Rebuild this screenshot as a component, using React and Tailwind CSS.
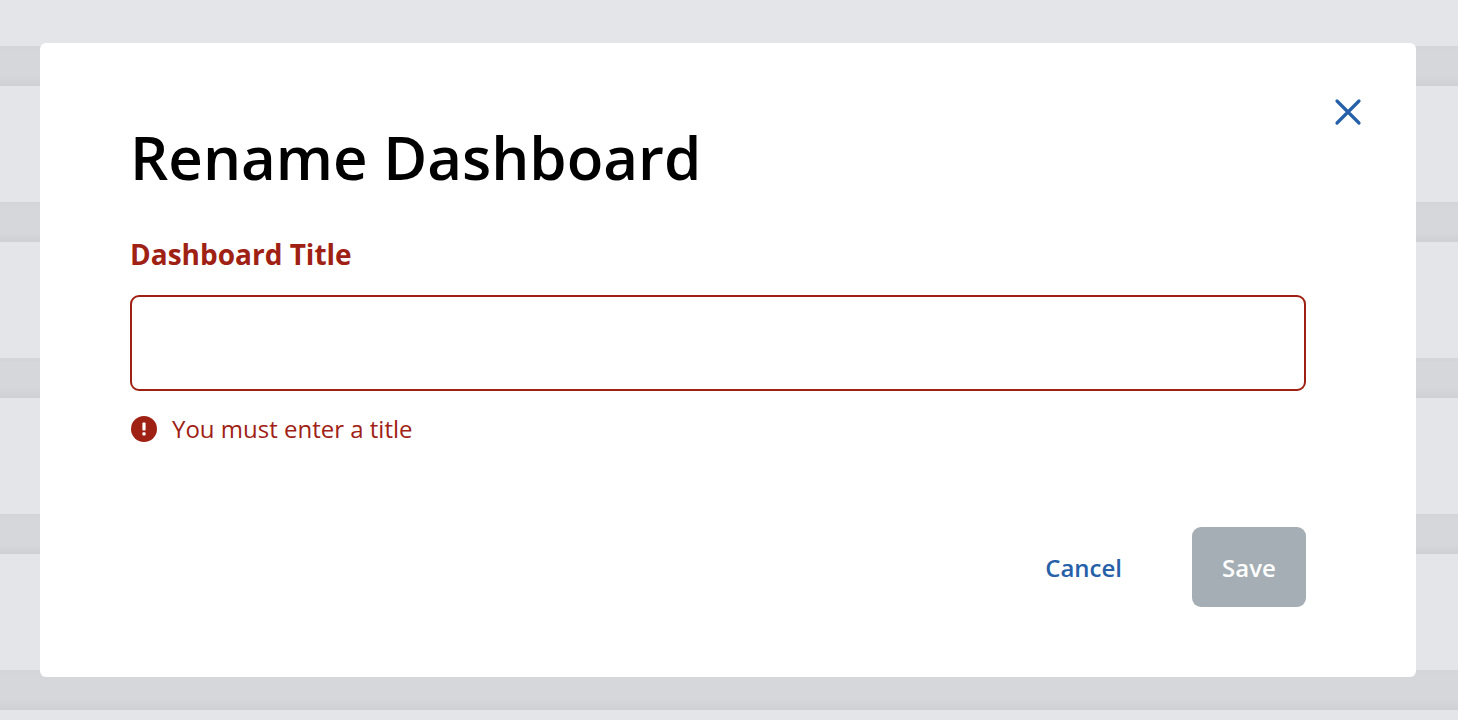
import React from "react";

function Band({ first }) {
  return (
    <>
      <div className={first ? "h-[46px] bg-[#e4e5e9]" : "h-[116px] bg-[#e4e5e9]"} />
      <div className="h-[40px] bg-[linear-gradient(to_bottom,#d3d4d8,#d6d7db_12%,#d6d7db_75%,#cfd0d4)]" />
    </>
  );
}

export default function App() {
  return (
    <div className="relative h-[720px] w-full overflow-hidden bg-[#e4e5e9] font-['Open_Sans','Noto_Sans',sans-serif]">
      <div className="flex flex-col">
        <Band first />
        <Band />
        <Band />
        <Band />
        <Band />
      </div>
      <div className="absolute left-[40px] top-[43px] flex h-[634px] w-[1376px] flex-col rounded-[6px] bg-white pl-[90px] pr-[110px] pt-[76px]">
        <button className="absolute right-[53px] top-[54px] text-[#2560a8]" aria-label="Close">
          <svg width="30" height="30" viewBox="0 0 30 30" fill="none" stroke="currentColor" strokeWidth="3.2" strokeLinecap="round">
            <path d="M4 4 L26 26 M26 4 L4 26" />
          </svg>
        </button>
        <h1 className="text-[60px] font-semibold leading-[76px] text-black">Rename Dashboard</h1>
        <label className="mt-[41px] text-[28px] font-bold leading-[36px] text-[#9f2114]">Dashboard Title</label>
        <div className="mt-[23px] h-[96px] w-full rounded-[9px] border-2 border-[#9f2114]" />
        <div className="mt-[21px] flex items-center gap-[15px] pl-px text-[#9f2114]">
          <svg width="26" height="26" viewBox="0 0 26 26">
            <circle cx="13" cy="13" r="13" fill="#9f2114" />
            <rect x="11.4" y="6.5" width="3.2" height="8" rx="1" fill="#fff" />
            <rect x="11.4" y="16.3" width="3.2" height="3.2" rx="1" fill="#fff" />
          </svg>
          <span className="text-[24px] leading-[34px]">You must enter a title</span>
        </div>
        <div className="mt-[81px] flex items-center justify-end">
          <button className="mr-[70px] pt-[2px] text-[24px] font-semibold leading-[34px] text-[#2560a8]">Cancel</button>
          <button className="h-[80px] w-[114px] rounded-[9px] bg-[#a5aeb4] pt-[2px] text-[24px] font-semibold text-white">Save</button>
        </div>
      </div>
    </div>
  );
}
